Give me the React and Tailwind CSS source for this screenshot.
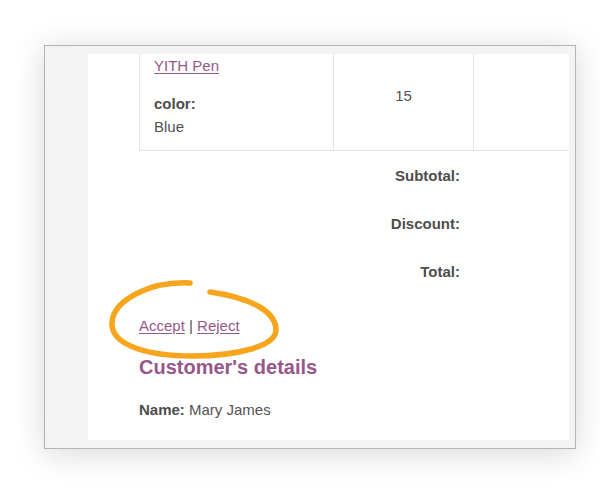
import React from "react";

const font = { fontFamily: '"Liberation Sans", Arial, sans-serif' };

const totals = ["Subtotal:", "Discount:", "Total:"];

const App = () => {
  return (
    <div className="relative w-[600px] h-[495px] bg-white overflow-hidden" style={font}>
      {/* Window */}
      <div className="absolute left-[44px] top-[45px] w-[532px] h-[404px] border border-[#b4b4b4] bg-[#f3f3f3] shadow-[0_4px_30px_rgba(0,0,0,0.16)] pl-[43px] pt-[8px] pr-[6px] pb-[8px] flex">
        <div className="flex-1 bg-white overflow-hidden flex flex-col text-[15px] leading-[20px] text-[#525252]">
          {/* Order item row */}
          <div className="ml-[51px] flex w-[600px] h-[97px] border-l border-b border-[#e5e5e5] shrink-0">
            <div className="w-[194px] border-r border-[#e5e5e5] pl-[14px] pt-[2px] flex flex-col">
              <a href="#" className="text-[#96588a] underline underline-offset-2">YITH Pen</a>
              <span className="mt-[18px] font-bold text-[#4d4d4d]">color:</span>
              <span className="mt-[3px]">Blue</span>
            </div>
            <div className="w-[140px] border-r border-[#e5e5e5] pt-[32px] text-center">15</div>
            <div className="flex-1" />
          </div>

          {/* Totals */}
          <div className="ml-[51px] w-[334px] pt-[1px] flex flex-col shrink-0">
            {totals.map((label) => (
              <div key={label} className="h-[48px] flex items-center justify-end pr-[13px] font-bold text-[#4d4d4d]">
                {label}
              </div>
            ))}
          </div>

          {/* Actions + customer */}
          <div className="ml-[51px] flex flex-col shrink-0">
            <div className="mt-[20px]">
              <a href="#" className="text-[#96588a] underline underline-offset-2">Accept</a>
              <span> | </span>
              <a href="#" className="text-[#96588a] underline underline-offset-2">Reject</a>
            </div>
            <h2 className="mt-[19px] text-[20px] leading-[24px] font-bold text-[#96588a]">Customer's details</h2>
            <p className="mt-[21px]">
              <span className="font-bold text-[#4d4d4d]">Name:</span> Mary James
            </p>
          </div>
        </div>
      </div>

      {/* Hand-drawn highlight */}
      <svg className="absolute left-0 top-0 pointer-events-none" width="600" height="495" viewBox="0 0 600 495">
        <path
          d="M190 283 C 150 281, 114 300, 112 322 C 110 346, 150 356, 192 356 C 238 356, 276 346, 276 330 C 276 312, 252 298, 210 292"
          fill="none"
          stroke="#f7a51c"
          strokeWidth="5.5"
          strokeLinecap="round"
        />
      </svg>
    </div>
  );
};

export default App;
